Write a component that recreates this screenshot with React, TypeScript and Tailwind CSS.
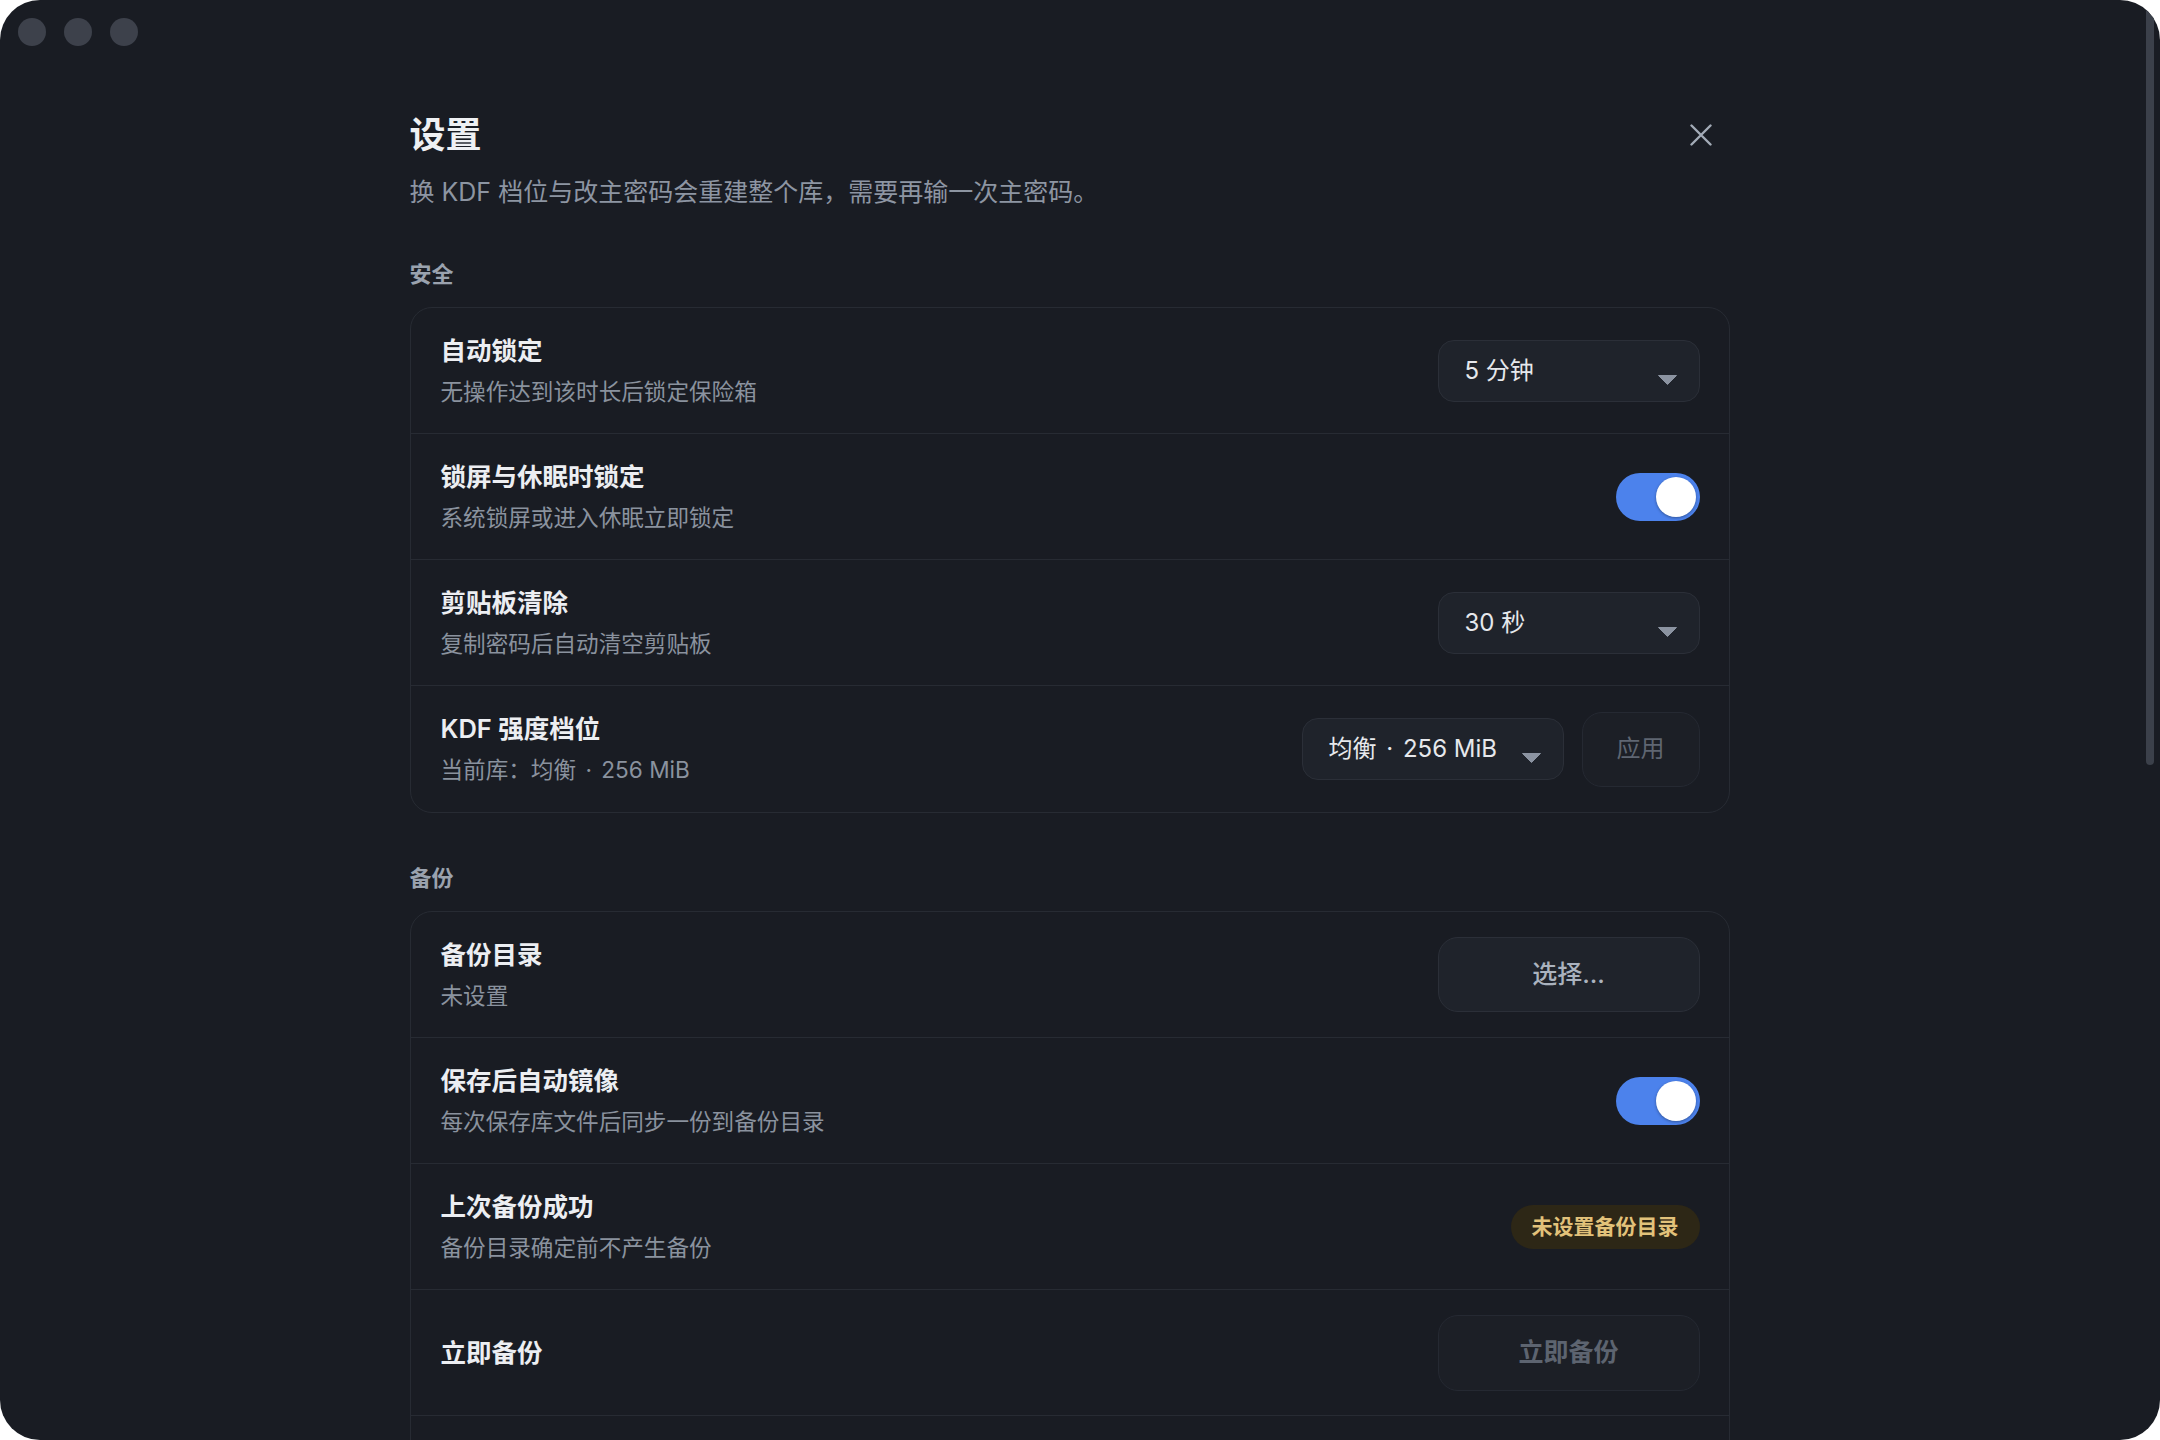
import { ReactNode } from "react";

const Caret = () => (
  <svg width="19" height="10" viewBox="0 0 19 10" className="mt-[18px] shrink-0">
    <path d="M0.5 0.5 H18.5 L9.5 9.5 Z" fill="#8b93a1" stroke="#8b93a1" strokeLinejoin="round" />
  </svg>
);

const Select = ({ value }: { value: ReactNode }) => (
  <div className="flex items-center justify-between w-[262px] h-[62px] pl-[26px] pr-[22px] rounded-[16px] border border-[#2b2f38] bg-[#1f232b] text-[24px] text-[#e6e8ec]">
    <span className="whitespace-pre">{value}</span>
    <Caret />
  </div>
);

const Toggle = () => (
  <div className="flex items-center justify-end w-[84px] h-[48px] p-[4px] rounded-full bg-[#4c82ec]">
    <div className="w-[40px] h-[40px] rounded-full bg-white shadow-[0_1px_3px_rgba(0,0,0,0.35)]" />
  </div>
);

const Dot = () => <span className="mx-[3px]">·</span>;

const Row = ({ title, desc, children }: { title?: string; desc?: ReactNode; children?: ReactNode }) => (
  <div className="flex items-center justify-between h-[126px] pl-[30px] pr-[29px]">
    <div>
      {title && <div className="text-[25.5px] leading-[36px] font-semibold text-[#eceef2]">{title}</div>}
      {desc && <div className="mt-[6px] text-[22.6px] leading-[34px] text-[#8a929e]">{desc}</div>}
    </div>
    <div className="flex items-center gap-[18px]">{children}</div>
  </div>
);

const Section = ({ label, children }: { label: string; children: ReactNode }) => (
  <div className="mt-[50px]">
    <div className="text-[22px] leading-[30px] font-semibold text-[#9aa2ae] mb-[18px]">{label}</div>
    <div className="rounded-[22px] border border-[#272b33] divide-y divide-[#272b33]">{children}</div>
  </div>
);

export default function App() {
  return (
    <div className="w-[2160px] h-[1440px] bg-white font-['Inter','Noto_Sans_CJK_SC',sans-serif]">
      <div className="relative flex flex-col h-full rounded-[40px] bg-[#191c23] overflow-hidden">
        {/* title bar */}
        <div className="flex items-center gap-[18px] h-[64px] px-[18px] shrink-0">
          <div className="w-[28px] h-[28px] rounded-full bg-[#3d414b]" />
          <div className="w-[28px] h-[28px] rounded-full bg-[#3d414b]" />
          <div className="w-[28px] h-[28px] rounded-full bg-[#3d414b]" />
        </div>

        <div className="flex-1 pr-[21px] pt-[49px]">
          <div className="mx-auto w-[1320px]">
            <div className="flex items-center justify-between pr-[18px]">
              <h1 className="text-[36px] leading-[44px] font-semibold text-[#eef0f3]">设置</h1>
              <svg width="22" height="22" viewBox="0 0 22 22">
                <path d="M1.5 1.5 L20.5 20.5 M20.5 1.5 L1.5 20.5" stroke="#a3abb7" strokeWidth="2.4" strokeLinecap="round" />
              </svg>
            </div>
            <p className="mt-[18px] text-[25px] leading-[34px] text-[#8d95a2]">
              换 KDF 档位与改主密码会重建整个库，需要再输一次主密码。
            </p>

            <Section label="安全">
              <Row title="自动锁定" desc="无操作达到该时长后锁定保险箱">
                <Select value="5 分钟" />
              </Row>
              <Row title="锁屏与休眠时锁定" desc="系统锁屏或进入休眠立即锁定">
                <Toggle />
              </Row>
              <Row title="剪贴板清除" desc="复制密码后自动清空剪贴板">
                <Select value="30 秒" />
              </Row>
              <Row
                title="KDF 强度档位"
                desc={
                  <>
                    当前库：均衡 <Dot /> 256 MiB
                  </>
                }
              >
                <Select
                  value={
                    <>
                      均衡 <Dot /> 256 MiB
                    </>
                  }
                />
                <button className="w-[118px] h-[75px] rounded-[20px] border border-[#252932] bg-[#1c1f26] text-[24px] text-[#5f6672]">
                  应用
                </button>
              </Row>
            </Section>

            <Section label="备份">
              <Row title="备份目录" desc="未设置">
                <button className="w-[262px] h-[75px] rounded-[20px] border border-[#2b2f38] bg-[#1f232b] text-[25px] font-medium text-[#aab2be]">
                  选择...
                </button>
              </Row>
              <Row title="保存后自动镜像" desc="每次保存库文件后同步一份到备份目录">
                <Toggle />
              </Row>
              <Row title="上次备份成功" desc="备份目录确定前不产生备份">
                <span className="flex items-center h-[44px] px-[21px] rounded-full bg-[#2d2716] text-[21px] font-semibold text-[#e2c27a]">
                  未设置备份目录
                </span>
              </Row>
              <Row title="立即备份">
                <button className="w-[262px] h-[76px] rounded-[20px] border border-[#252932] bg-[#1c1f26] text-[25px] font-semibold text-[#5d6470]">
                  立即备份
                </button>
              </Row>
              <Row />
            </Section>
          </div>
        </div>

        {/* overlay scrollbar */}
        <div className="absolute top-0 right-[6px] w-[8px] h-[765px] rounded-b-full bg-[#3b404a]" />
      </div>
    </div>
  );
}
